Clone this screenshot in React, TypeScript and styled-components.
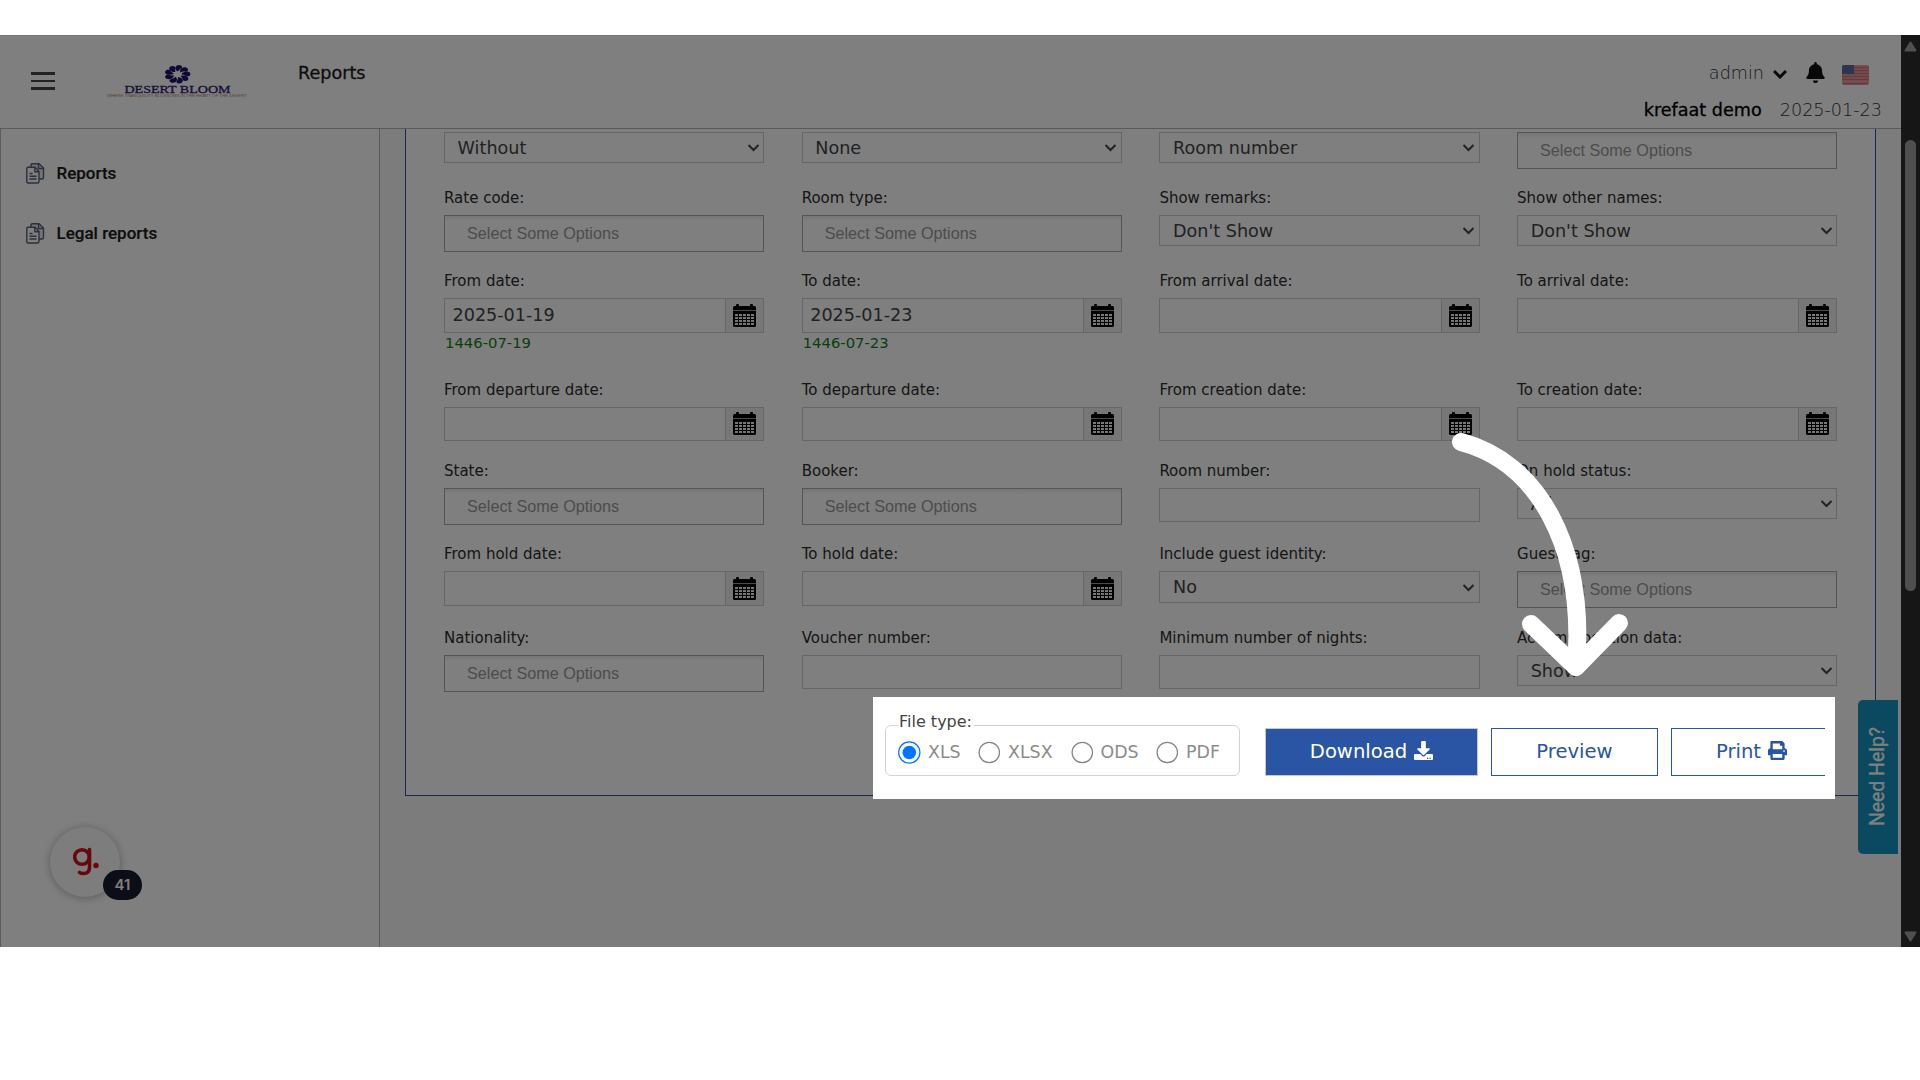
import React from 'react';
import styled, { createGlobalStyle } from 'styled-components';
import { FaBell, FaDownload, FaPrint } from 'react-icons/fa';

const GlobalStyle = createGlobalStyle`
  * {
    box-sizing: border-box;
  }

  body {
    margin: 0;
    background: #fff;
    font-family: 'DejaVu Sans', sans-serif;
    overflow: hidden;
  }
`;

const Page = styled.div`
  width: 1920px;
  height: 1080px;
  padding-top: 35px;
`;

const Screen = styled.div`
  position: relative;
  display: flex;
  width: 1920px;
  height: 912px;
  overflow: hidden;
  background: #f8f8f8;
`;

const AppArea = styled.div`
  display: flex;
  flex-direction: column;
  width: 1901px;
`;

const Header = styled.header`
  display: flex;
  flex: none;
  justify-content: space-between;
  height: 94px;
  border-bottom: 1px solid #b4b4b4;
  border-top: 1px solid #eee;
  background: #fff;
`;

const HeaderLeft = styled.div`
  display: flex;
  align-items: flex-start;
`;

const MenuButton = styled.div`
  display: flex;
  flex-direction: column;
  gap: 5px;
  width: 24px;
  margin: 36px 0 0 31px;

  span {
    height: 2.5px;
    background: #444;
  }
`;

const Logo = styled.svg`
  width: 150px;
  height: 50px;
  margin: 20px 0 0 49px;
`;

const PageTitle = styled.div`
  margin: 25px 0 0 44px;
  font-size: 17.6px;
  line-height: 24px;
  color: #1a1a1a;
  -webkit-text-stroke: 0.3px #1a1a1a;
`;

const HeaderRight = styled.div`
  display: flex;
  flex-direction: column;
  gap: 11px;
  align-items: flex-end;
  padding: 24px 19px 0 0;
  font-size: 17.6px;
  line-height: 26px;
`;

const UserRow = styled.div`
  display: flex;
  align-items: center;
  padding-right: 13px;
`;

const InfoRow = styled.div`
  display: flex;
  gap: 18px;
`;

const LightText = styled.span`
  font-weight: 200;
  color: #333;
`;

const HotelName = styled.span`
  color: #000;
  -webkit-text-stroke: 0.3px #000;
`;

const Caret = styled.svg`
  width: 14px;
  height: 10px;
  margin: 2px 19px 0 9px;
`;

const Bell = styled(FaBell)`
  width: 19px;
  height: 21px;
  margin: -2px 17px 0 0;
  color: #111;
`;

const Flag = styled.svg`
  width: 27px;
  height: 20px;
  margin-top: 3px;
`;

const Body = styled.div`
  display: flex;
  flex: 1;
  min-height: 0;
`;

const Sidebar = styled.aside`
  display: flex;
  flex-direction: column;
  gap: 36px;
  width: 380px;
  padding: 32px 0 0 25px;
  border: solid #b4b4b4;
  border-width: 0 1px;
  background: #fff;
`;

const SidebarItem = styled.div`
  display: flex;
  align-items: center;
  gap: 11.5px;
  height: 24px;
  font: 500 17px/24px Roboto, sans-serif;
  color: #1c1c1c;
  -webkit-text-stroke: 0.2px #1c1c1c;
`;

const Main = styled.main`
  flex: 1;
  padding: 0 25px;
`;

const Panel = styled.section`
  height: 667px;
  padding: 3px 0 0 38px;
  border: solid #28559f;
  border-width: 0 1px 1px;
  background: #fff;
`;

const FormGrid = styled.div`
  display: grid;
  grid-template-columns: repeat(4, 320.2px);
  grid-template-rows: 58px 83px 109px 81px 83px 84px 62px;
  column-gap: 37.5px;
`;

const Field = styled.div`
  display: flex;
  flex-direction: column;
`;

const Label = styled.label`
  height: 25px;
  font-size: 15px;
  line-height: 16px;
  white-space: nowrap;
  color: #2c2c2c;
`;

const Select = styled.div<{ $tall?: boolean }>`
  display: flex;
  align-items: center;
  justify-content: space-between;
  height: ${props => (props.$tall ? 32 : 31)}px;
  padding: 0 3.5px 0 12.6px;
  border: 1px solid #c8ccd6;
  font-size: 17.6px;
  color: #444;
`;

const MultiSelect = styled.div`
  height: 37px;
  padding-left: 22px;
  border: 1px solid #aaa;
  background: linear-gradient(#eee 1%, #fff 15%);
  font: 16.2px/35px 'Liberation Sans', sans-serif;
  color: #999;
`;

const DateBox = styled.div<{ $height: number }>`
  display: flex;
  height: ${props => props.$height}px;
  border: 1px solid #c8ccd6;
`;

const DateValue = styled.div`
  flex: 1;
  padding-left: 7.5px;
  font-size: 17.6px;
  line-height: 33px;
  color: #444;
`;

const DateAddon = styled.div`
  display: flex;
  align-items: center;
  justify-content: center;
  width: 38px;
  border-left: 1px solid #c8ccd6;
  background: #eee;
`;

const TextBox = styled.div`
  height: 34px;
  border: 1px solid #c8ccd6;
`;

const Hint = styled.div`
  padding-left: 1px;
  font-size: 14.8px;
  line-height: 20px;
  color: #138013;
`;

const HelpTab = styled.div`
  position: absolute;
  top: 665px;
  left: 1858px;
  display: flex;
  align-items: center;
  justify-content: center;
  width: 40px;
  height: 154px;
  padding-right: 2px;
  border-radius: 5px 0 0 5px;
  background: #1493be;
  color: #fff;
  font: 19.4px Roboto, sans-serif;
  -webkit-text-stroke: 0.3px #fff;

  span {
    writing-mode: vertical-rl;
    transform: rotate(180deg);
  }
`;

const ChatBubble = styled.div`
  position: absolute;
  top: 792px;
  left: 50px;
  display: flex;
  align-items: center;
  justify-content: center;
  width: 70px;
  height: 70px;
  padding-bottom: 1px;
  padding-left: 2px;
  border-radius: 50%;
  background: #fafafa;
  box-shadow: 0 1px 8px rgba(0, 0, 0, 0.3);
`;

const ChatCount = styled.div`
  position: absolute;
  top: 835px;
  left: 103px;
  width: 39px;
  height: 30px;
  border-radius: 15px;
  background: #161c2c;
  color: #fff;
  font: 600 15px/30px Inter, sans-serif;
  text-align: center;
`;

const Scrollbar = styled.div`
  display: flex;
  flex-direction: column;
  align-items: center;
  justify-content: space-between;
  width: 19px;
  padding: 6px 0 5px;
  background: #2c2c2c;
`;

const ScrollTrack = styled.div`
  flex: 1;
  padding-top: 88px;
`;

const ScrollThumb = styled.div`
  width: 11px;
  height: 451px;
  border-radius: 6px;
  background: #9f9f9f;
`;

const Dim = styled.div`
  position: absolute;
  inset: 0;
  background: rgba(0, 0, 0, 0.5);
`;

const Spotlight = styled.div`
  position: absolute;
  top: 662px;
  left: 873px;
  display: flex;
  width: 962px;
  height: 102px;
  padding: 15px 10px 0 12px;
  background: #fff;
`;

const FileTypes = styled.fieldset`
  display: flex;
  align-items: center;
  width: 355px;
  height: 64px;
  margin: 0;
  padding: 0 0 10px 12px;
  border: 1px solid #d2d2d2;
  border-radius: 6px;

  legend {
    height: 27px;
    padding: 0 2px 0 1px;
    font-size: 16px;
    line-height: 20px;
    color: #444;
  }
`;

const RadioOption = styled.div<{ $width: number }>`
  display: flex;
  align-items: center;
  gap: 7px;
  width: ${props => props.$width}px;
  height: 23px;
  font-size: 17.4px;
  color: #8c8c8c;
`;

const Actions = styled.div`
  display: flex;
  flex: 1;
  padding: 16px 0 0 25px;
  overflow: hidden;
`;

const ActionButton = styled.div<{ $primary?: boolean; $width: number }>`
  display: flex;
  flex: none;
  align-items: center;
  justify-content: center;
  gap: 7px;
  width: ${props => props.$width}px;
  height: 48px;
  margin-right: 13px;
  padding-bottom: 2px;
  border: 1px solid ${props => (props.$primary ? '#c4c8d0' : '#2955a4')};
  background: ${props => (props.$primary ? '#2955a4' : '#fff')};
  color: ${props => (props.$primary ? '#fff' : '#2955a4')};
  font-size: 19.6px;

  svg {
    width: 19px;
    height: 19px;
    margin-top: -2px;
  }
`;

const Arrow = styled.svg`
  position: absolute;
  top: 345px;
  left: 1440px;
  width: 200px;
  height: 340px;
`;

const Chevron = () => (
  <svg width="13" height="9" viewBox="0 0 13 9">
    <path d="M1.5 2l5 5 5-5" fill="none" stroke="#444" strokeWidth="2" />
  </svg>
);

const CalendarIcon = () => (
  <svg width="23" height="24" viewBox="0 0 23 24">
    <rect x="3" y="0" width="3" height="4" rx="1" />
    <rect x="17" y="0" width="3" height="4" rx="1" />
    <path d="M0 3.5q0-1.5 1.5-1.5h20q1.5 0 1.5 1.5v18q0 1.5-1.5 1.5h-20q-1.5 0-1.5-1.5z" />
    <path d="M0 6.5h23" stroke="#999" strokeWidth="1" />
    <path
      d="M2 10h3v2h-3zM6 10h3v2h-3zM10 10h3v2h-3zM14 10h3v2h-3zM18 10h3v2h-3zM2 13h3v2h-3zM6 13h3v2h-3zM10 13h3v2h-3zM14 13h3v2h-3zM18 13h3v2h-3zM2 16h3v2h-3zM6 16h3v2h-3zM10 16h3v2h-3zM14 16h3v2h-3zM18 16h3v2h-3zM2 19h3v2h-3zM6 19h3v2h-3zM10 19h3v2h-3zM14 19h3v2h-3zM18 19h3v2h-3z"
      fill="#eee"
    />
  </svg>
);

const DocsIcon = () => (
  <svg width="19" height="21" viewBox="0 0 19 21" fill="#e4e6ea" stroke="#566078" strokeWidth="1.4">
    <path d="M5 4V2q0-1.2 1.2-1.2H13L17.5 5v9.5q0 1.5-1.5 1.5h-3" />
    <path d="M12.5 1v4.5h5" fill="none" />
    <path d="M.8 5.5q0-1.3 1.3-1.3H9L13 8.5v10q0 1.5-1.5 1.5H2.1Q.8 20 .8 18.5z" fill="#fff" />
    <path d="M8.8 4.2V8.7H13M3.5 10.5h3M3.5 13.2h7M3.5 16h7" fill="none" />
  </svg>
);

const Radio = ({ checked }: { checked?: boolean }) => (
  <svg width="23" height="23" viewBox="0 0 23 23">
    <circle
      cx="11.3"
      cy="11.5"
      r={checked ? 10.6 : 10.2}
      fill="#fff"
      stroke={checked ? '#0075ff' : '#858585'}
      strokeWidth="1.2"
    />
    {checked && <circle cx="11.3" cy="11.5" r="6.8" fill="#0075ff" />}
  </svg>
);

type FieldDef = {
  label?: string;
  kind: 'select' | 'multi' | 'date' | 'text';
  value?: string;
  hint?: string;
  height?: number;
  tall?: boolean;
};

const fields: FieldDef[] = [
  { kind: 'select', value: 'Without' },
  { kind: 'select', value: 'None' },
  { kind: 'select', value: 'Room number' },
  { kind: 'multi' },
  { label: 'Rate code:', kind: 'multi' },
  { label: 'Room type:', kind: 'multi' },
  { label: 'Show remarks:', kind: 'select', value: "Don't Show" },
  { label: 'Show other names:', kind: 'select', value: "Don't Show" },
  { label: 'From date:', kind: 'date', value: '2025-01-19', hint: '1446-07-19', height: 35 },
  { label: 'To date:', kind: 'date', value: '2025-01-23', hint: '1446-07-23', height: 35 },
  { label: 'From arrival date:', kind: 'date', height: 35 },
  { label: 'To arrival date:', kind: 'date', height: 35 },
  { label: 'From departure date:', kind: 'date' },
  { label: 'To departure date:', kind: 'date' },
  { label: 'From creation date:', kind: 'date' },
  { label: 'To creation date:', kind: 'date' },
  { label: 'State:', kind: 'multi' },
  { label: 'Booker:', kind: 'multi' },
  { label: 'Room number:', kind: 'text' },
  { label: 'On hold status:', kind: 'select', value: 'All' },
  { label: 'From hold date:', kind: 'date', height: 35 },
  { label: 'To hold date:', kind: 'date', height: 35 },
  { label: 'Include guest identity:', kind: 'select', value: 'No', tall: true },
  { label: 'Guest tag:', kind: 'multi' },
  { label: 'Nationality:', kind: 'multi' },
  { label: 'Voucher number:', kind: 'text' },
  { label: 'Minimum number of nights:', kind: 'text' },
  { label: 'Accommodation data:', kind: 'select', value: 'Show' },
];

const FormField: React.FC<{ field: FieldDef }> = ({ field }) => (
  <Field>
    {field.label && <Label>{field.label}</Label>}
    {field.kind === 'select' && (
      <Select $tall={field.tall}>
        {field.value}
        <Chevron />
      </Select>
    )}
    {field.kind === 'multi' && <MultiSelect>Select Some Options</MultiSelect>}
    {field.kind === 'text' && <TextBox />}
    {field.kind === 'date' && (
      <DateBox $height={field.height || 34}>
        <DateValue>{field.value}</DateValue>
        <DateAddon>
          <CalendarIcon />
        </DateAddon>
      </DateBox>
    )}
    {field.hint && <Hint>{field.hint}</Hint>}
  </Field>
);

const petals = [0, 40, 80, 120, 160, 200, 240, 280, 320];

const App: React.FC = () => (
  <>
    <GlobalStyle />
    <Page>
      <Screen>
        <AppArea>
          <Header>
            <HeaderLeft>
              <MenuButton>
                <span />
                <span />
                <span />
              </MenuButton>
              <Logo viewBox="0 0 150 50">
                <g transform="translate(73.5 18.3) scale(1.08 .78)" fill="#23106e">
                  {petals.map(a => (
                    <path
                      key={a}
                      d="M.5-3.5C-3.2-6-2.8-11 1-12 5-11.5 5-8.5 3-7 1.500-5.800 1-4.500 .5-3.500z"
                      transform={`rotate(${a})`}
                    />
                  ))}
                </g>
                <text
                  x="20.5"
                  y="36.5"
                  textLength="106"
                  lengthAdjust="spacingAndGlyphs"
                  fontFamily="Liberation Serif, serif"
                  fontSize="11"
                  fill="#2d1d70"
                  stroke="#2d1d70"
                  strokeWidth=".3"
                >
                  DESERT BLOOM
                </text>
                <text
                  x="3"
                  y="41"
                  textLength="140"
                  lengthAdjust="spacingAndGlyphs"
                  fontFamily="Liberation Sans, sans-serif"
                  fontSize="4"
                  fill="#b88850"
                >
                  WHERE TRANQUILITY BLOSSOMS IN THE HEART OF THE DESERT
                </text>
              </Logo>
              <PageTitle>Reports</PageTitle>
            </HeaderLeft>
            <HeaderRight>
              <UserRow>
                <LightText>admin</LightText>
                <Caret viewBox="0 0 14 10">
                  <path d="M1 2l6 6 6-6" fill="none" stroke="#111" strokeWidth="3" />
                </Caret>
                <Bell />
                <Flag viewBox="0 0 27 20">
                  <rect width="27" height="20" rx="2" fill="#e4a4a8" />
                  <path
                    d="M0 2.5h27M0 5.5h27M0 8.5h27M0 11.5h27M0 14.5h27M1 18.5h25"
                    stroke="#d07074"
                    strokeWidth="1.3"
                  />
                  <path d="M0 2q0-2 2-2h10v9H0z" fill="#5a6aa6" />
                </Flag>
              </UserRow>
              <InfoRow>
                <HotelName>krefaat demo</HotelName>
                <LightText>2025-01-23</LightText>
              </InfoRow>
            </HeaderRight>
          </Header>
          <Body>
            <Sidebar>
              <SidebarItem>
                <DocsIcon />
                Reports
              </SidebarItem>
              <SidebarItem>
                <DocsIcon />
                Legal reports
              </SidebarItem>
            </Sidebar>
            <Main>
              <Panel>
                <FormGrid>
                  {fields.map((field, i) => (
                    <FormField key={i} field={field} />
                  ))}
                </FormGrid>
              </Panel>
            </Main>
          </Body>
        </AppArea>
        <Scrollbar>
          <svg width="13" height="11" viewBox="0 0 13 11">
            <path d="M6.5 1.5L11.5 9.5H1.5z" fill="#9f9f9f" stroke="#9f9f9f" strokeWidth="2" strokeLinejoin="round" />
          </svg>
          <ScrollTrack>
            <ScrollThumb />
          </ScrollTrack>
          <svg width="13" height="11" viewBox="0 0 13 11">
            <path d="M6.5 9.5L11.5 1.5H1.5z" fill="#9f9f9f" stroke="#9f9f9f" strokeWidth="2" strokeLinejoin="round" />
          </svg>
        </Scrollbar>
        <HelpTab>
          <span>Need Help?</span>
        </HelpTab>
        <ChatBubble>
          <svg width="26" height="29" viewBox="0 0 26 29">
            <g fill="none" stroke="#d01018" strokeWidth="3.6" strokeLinecap="round">
              <circle cx="9" cy="10" r="7.3" />
              <path d="M16.5 2.5v18q0 6-6 6-3 0-4-1" />
            </g>
            <circle cx="23" cy="18.5" r="2.7" fill="#d01018" />
          </svg>
        </ChatBubble>
        <ChatCount>41</ChatCount>
        <Dim />
        <Spotlight>
          <FileTypes>
            <legend>File type:</legend>
            <RadioOption $width={80}>
              <Radio checked />
              XLS
            </RadioOption>
            <RadioOption $width={92.5}>
              <Radio />
              XLSX
            </RadioOption>
            <RadioOption $width={85.5}>
              <Radio />
              ODS
            </RadioOption>
            <RadioOption $width={70}>
              <Radio />
              PDF
            </RadioOption>
          </FileTypes>
          <Actions>
            <ActionButton $primary $width={213}>
              Download <FaDownload />
            </ActionButton>
            <ActionButton $width={167}>Preview</ActionButton>
            <ActionButton $width={161}>
              Print <FaPrint />
            </ActionButton>
          </Actions>
        </Spotlight>
        <Arrow viewBox="0 0 200 340">
          <g fill="none" stroke="#fff" strokeWidth="18" strokeLinecap="round" strokeLinejoin="round">
            <path d="M21 62C97 82 146 165 136 287" />
            <path d="M91 244L136 287 179 243" />
          </g>
        </Arrow>
      </Screen>
    </Page>
  </>
);

export default App;
